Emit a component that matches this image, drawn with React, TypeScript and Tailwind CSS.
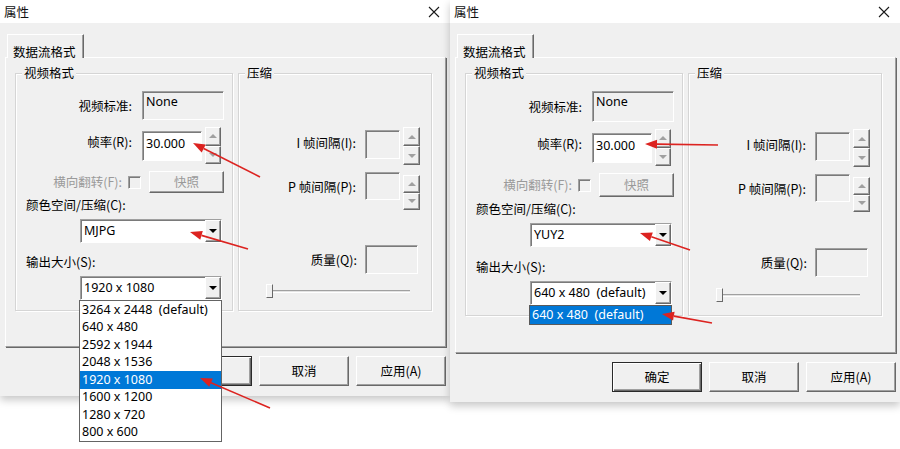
import React from "react";

const lbl =
  "font-['Noto_Sans_CJK_SC','Noto_Sans',sans-serif] text-[12.5px] leading-[14px] text-black whitespace-nowrap";
const lblDis =
  "font-['Noto_Sans_CJK_SC','Noto_Sans',sans-serif] text-[12.5px] leading-[14px] text-[#9a9a9a] whitespace-nowrap";
const val =
  "font-['Noto_Sans','Noto_Sans_CJK_SC',sans-serif] text-[12.5px] leading-[16px] text-black whitespace-pre";

const sunken =
  "border border-t-[#a0a0a0] border-l-[#a0a0a0] border-r-white border-b-white shadow-[inset_1px_1px_0_#7a7a7a]";
const raised =
  "border border-t-white border-l-white border-r-[#696969] border-b-[#696969] shadow-[inset_-1px_-1px_0_#a0a0a0]";

function UpTri({ color }: { color: "gray" | "black" }) {
  return color === "gray" ? (
    <div className="w-0 h-0 border-x-[4px] border-x-transparent border-b-[4px] border-b-[#a0a0a0]" />
  ) : (
    <div className="w-0 h-0 border-x-[4px] border-x-transparent border-b-[4px] border-b-black" />
  );
}
function DownTri({ color }: { color: "gray" | "black" }) {
  return color === "gray" ? (
    <div className="w-0 h-0 border-x-[4px] border-x-transparent border-t-[4px] border-t-[#a0a0a0]" />
  ) : (
    <div className="w-0 h-0 border-x-[4px] border-x-transparent border-t-[4px] border-t-black" />
  );
}

function Spinner({ size }: { size: string }) {
  return (
    <div className={`flex flex-col shrink-0 ${size}`}>
      <div className={`flex-1 flex items-center justify-center bg-[#f0f0f0] ${raised}`}>
        <UpTri color="gray" />
      </div>
      <div className={`flex-1 flex items-center justify-center bg-[#f0f0f0] ${raised}`}>
        <DownTri color="gray" />
      </div>
    </div>
  );
}

function Combo({ text, children }: { text: string; children?: React.ReactNode }) {
  return (
    <div className={`relative ml-[64px] w-[142px] h-[24px] flex bg-white ${sunken}`}>
      <div className={`flex-1 flex items-center pl-[3px] ${val}`}>{text}</div>
      <div className={`w-[16px] h-full flex items-center justify-center bg-[#f0f0f0] ${raised}`}>
        <DownTri color="black" />
      </div>
      {children}
    </div>
  );
}

function Group({
  title,
  width,
  height,
  children,
}: {
  title: string;
  width: string;
  height: string;
  children: React.ReactNode;
}) {
  return (
    <div
      className={`relative shrink-0 ${width} ${height} border border-[#d5d5d5] shadow-[inset_1px_1px_0_#ffffff,1px_1px_0_#ffffff] flex flex-col`}
    >
      <span className={`absolute left-[6px] -top-[8px] px-[2px] bg-[#f0f0f0] ${lbl}`}>{title}</span>
      {children}
    </div>
  );
}

const sizes = [
  "3264 x 2448  (default)",
  "640 x 480",
  "2592 x 1944",
  "2048 x 1536",
  "1920 x 1080",
  "1600 x 1200",
  "1280 x 720",
  "800 x 600",
];

function Group1({ r }: { r: boolean }) {
  return (
    <Group title="视频格式" width="w-[218px]" height={r ? "h-[243px]" : "h-[238px]"}>
      {/* 视频标准 */}
      <div className={`mt-[17px] flex items-center ${r ? "h-[31px]" : "h-[29px]"}`}>
        <div className={`w-[116px] text-right ${lbl}`}>视频标准:</div>
        <div className={`ml-[10px] w-[82px] h-full bg-[#f0f0f0] pl-[3px] pt-[2px] ${sunken} ${val}`}>None</div>
      </div>
      {/* 帧率 */}
      <div className="mt-[7px] h-[37px] flex items-center">
        <div className={`w-[116px] text-right -translate-y-[4px] ${lbl}`}>帧率(R):</div>
        <div className={`ml-[10px] w-[60px] h-[30px] bg-white pl-[3px] pt-[4px] ${sunken} ${val}`}>30.000</div>
        <div className="ml-[3px]">
          <Spinner size="w-[16px] h-[37px]" />
        </div>
      </div>
      {/* 横向翻转 */}
      <div className={`mt-[7px] flex items-center ${r ? "h-[24px]" : "h-[22px]"}`}>
        <div className={`w-[106px] text-right ${lblDis}`}>横向翻转(F):</div>
        <div className={`ml-[6px] w-[13px] h-[13px] bg-[#f0f0f0] ${sunken}`} />
        <div
          className={`ml-[8px] w-[75px] h-full flex items-center justify-center bg-[#f0f0f0] ${raised} ${lblDis}`}
        >
          快照
        </div>
      </div>
      <div className={`mt-[5px] pl-[10px] ${lbl}`}>颜色空间/压缩(C):</div>
      <div className="mt-[7px]">
        <Combo text={r ? "YUY2" : "MJPG"} />
      </div>
      <div className={`${r ? "mt-[13px]" : "mt-[12px]"} pl-[10px] ${lbl}`}>输出大小(S):</div>
      <div className="mt-[7px] relative z-30">
        {r ? (
          <Combo text="640 x 480  (default)">
            <div className="absolute left-[-2px] top-[23px] w-[143px] h-[20px] bg-[#0078d7] border border-[#5a5a5a] flex items-center pl-[2px]">
              <span className="font-['Noto_Sans','Noto_Sans_CJK_SC',sans-serif] text-[12.5px] leading-[16px] text-white whitespace-pre">
                640 x 480  (default)
              </span>
            </div>
          </Combo>
        ) : (
          <Combo text="1920 x 1080">
            <div className="absolute left-[-2px] top-[23px] w-[143px] bg-white border border-[#646464] flex flex-col">
              {sizes.map((s) =>
                s === "1920 x 1080" ? (
                  <div key={s} className="h-[17.5px] bg-[#0078d7] flex items-center pl-[2px]">
                    <span className="font-['Noto_Sans','Noto_Sans_CJK_SC',sans-serif] text-[12.5px] leading-[16px] text-white whitespace-pre">
                      {s}
                    </span>
                  </div>
                ) : (
                  <div key={s} className="h-[17.5px] flex items-center pl-[2px]">
                    <span className="font-['Noto_Sans','Noto_Sans_CJK_SC',sans-serif] text-[12.5px] leading-[16px] text-black whitespace-pre">
                      {s}
                    </span>
                  </div>
                )
              )}
            </div>
          </Combo>
        )}
      </div>
    </Group>
  );
}

function Group2({ r }: { r: boolean }) {
  return (
    <Group title="压缩" width="w-[194px]" height={r ? "h-[243px]" : "h-[238px]"}>
      <div className={`${r ? "mt-[55px]" : "mt-[53px]"} h-[38px] flex items-start`}>
        <div className={`mt-[3px] w-[117px] h-[29px] flex items-center justify-end -translate-y-[2px] ${lbl}`}>
          I 帧间隔(I):
        </div>
        <div className={`ml-[9px] mt-[3px] w-[35px] h-[29px] bg-[#f0f0f0] ${sunken}`} />
        <div className="ml-[3px]">
          <Spinner size="w-[17px] h-[38px]" />
        </div>
      </div>
      <div className="mt-[7px] h-[38px] flex items-start">
        <div className={`w-[117px] h-[28px] flex items-center justify-end translate-y-[1px] ${lbl}`}>
          P 帧间隔(P):
        </div>
        <div className={`ml-[9px] w-[35px] h-[28px] bg-[#f0f0f0] ${sunken}`} />
        <div className="ml-[3px] mt-[3px]">
          <Spinner size="w-[17px] h-[35px]" />
        </div>
      </div>
      <div className={`${r ? "mt-[36px]" : "mt-[35px]"} h-[29px] flex items-center`}>
        <div className={`w-[118px] text-right ${lbl}`}>质量(Q):</div>
        <div className={`ml-[8px] w-[53px] h-[29px] bg-[#f0f0f0] ${sunken}`} />
      </div>
      <div className={`${r ? "mt-[11px]" : "mt-[10px]"} ml-[27px] h-[14px] flex items-center`}>
        <div className="w-[7px] h-[14px] bg-[#f0f0f0] border border-t-white border-l-white border-r-[#696969] border-b-[#696969]" />
        <div className="w-[137px] h-[3px] border-t border-t-[#a0a0a0] border-b border-b-white bg-[#e3e3e3]" />
      </div>
    </Group>
  );
}

function Btn({ label, def }: { label: string; def?: boolean }) {
  return def ? (
    <div
      className={`w-[90px] h-[30px] flex items-center justify-center bg-[#f0f0f0] border border-[#2a2a2a] shadow-[inset_1px_1px_0_#ffffff,inset_-1px_-1px_0_#696969,inset_-2px_-2px_0_#a0a0a0] ${lbl}`}
    >
      {label}
    </div>
  ) : (
    <div className={`w-[90px] h-[30px] flex items-center justify-center bg-[#f0f0f0] ${raised} ${lbl}`}>{label}</div>
  );
}

function Dialog({ variant }: { variant: "left" | "right" }) {
  const r = variant === "right";
  return (
    <div className="relative w-[450px] shrink-0 flex flex-col bg-[#f0f0f0] shadow-[0_4px_8px_rgba(0,0,0,0.22)] pb-[10px]">
      <div className="h-[23px] bg-white flex items-center justify-between pl-[4px] pr-[10px]">
        <span className="font-['Noto_Sans_CJK_SC','Noto_Sans',sans-serif] text-[12.5px] leading-[16px] text-[#111]">
          属性
        </span>
        <svg width="12" height="12" viewBox="0 0 12 12">
          <path d="M1 1L11 11M11 1L1 11" stroke="#1a1a1a" strokeWidth="1.1" />
        </svg>
      </div>
      <div className="pt-[11px] pl-[5px] flex flex-col">
        <div className="relative z-10 ml-[2px] -mb-[1px] w-[77px] h-[24px] bg-[#f0f0f0] border-t border-l border-r border-t-white border-l-white border-r-[#696969] shadow-[inset_-1px_0_0_#a0a0a0] pl-[5px] pt-[4px]">
          <span className={lbl}>数据流格式</span>
        </div>
        <div
          className={`${r ? "h-[296px]" : "h-[290px]"} w-[441px] border border-t-white border-l-white border-r-[#a0a0a0] border-b-[#a0a0a0] shadow-[1px_1px_0_#696969] pt-[15px] pl-[9px] flex items-start gap-[5px]`}
        >
          <Group1 r={r} />
          <Group2 r={r} />
        </div>
        <div className="mt-[9px] flex justify-end gap-[7px] pr-[4px]">
          <Btn label="确定" def />
          <Btn label="取消" />
          <Btn label="应用(A)" />
        </div>
      </div>
    </div>
  );
}

const arrows: [number, number, number, number][] = [
  [260, 177, 193, 143],
  [248, 249, 190, 232],
  [270, 408, 200, 378],
  [718, 145, 645, 144],
  [690, 250, 640, 233],
  [712, 323, 662, 314],
];

function Arrows() {
  return (
    <svg className="absolute left-0 top-0 pointer-events-none z-50" width={900} height={449}>
      {arrows.map(([x1, y1, x2, y2], i) => {
        const a = Math.atan2(y2 - y1, x2 - x1);
        const L = 12;
        const W = 4.5;
        const bx = x2 - L * Math.cos(a);
        const by = y2 - L * Math.sin(a);
        const px = -Math.sin(a) * W;
        const py = Math.cos(a) * W;
        return (
          <g key={i}>
            <line x1={x1} y1={y1} x2={bx} y2={by} stroke="#dc2320" strokeWidth={1.6} />
            <polygon
              points={`${x2},${y2} ${bx + px},${by + py} ${bx - px},${by - py}`}
              fill="#dc2320"
            />
          </g>
        );
      })}
    </svg>
  );
}

export default function App() {
  return (
    <div className="relative w-[900px] h-[449px] bg-white overflow-hidden flex items-start">
      <Dialog variant="left" />
      <Dialog variant="right" />
      <Arrows />
    </div>
  );
}
